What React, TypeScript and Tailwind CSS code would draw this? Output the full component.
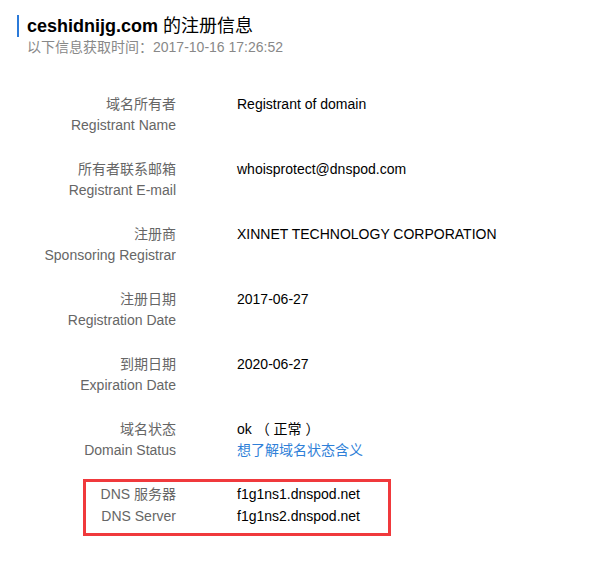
const rows = [
  { cn: '域名所有者', en: 'Registrant Name', value: 'Registrant of domain' },
  { cn: '所有者联系邮箱', en: 'Registrant E-mail', value: 'whoisprotect@dnspod.com' },
  { cn: '注册商', en: 'Sponsoring Registrar', value: 'XINNET TECHNOLOGY CORPORATION' },
  { cn: '注册日期', en: 'Registration Date', value: '2017-06-27' },
  { cn: '到期日期', en: 'Expiration Date', value: '2020-06-27' },
]

const font = { fontFamily: '"Liberation Sans", Arial, "Noto Sans CJK SC", sans-serif' }

const App = () => {
  return (
    <div className="w-[602px] h-[563px] bg-white text-[14px]" style={font}>
      <div className="pt-[15px] pl-[17px]">
        <h1 className="border-l-2 border-[#2b7ad9] pl-2 text-[18px] leading-[22px] text-black">
          <span className="font-bold">ceshidnijg.com</span> 的注册信息
        </h1>
        <p className="pl-[10px] text-[14px] leading-[20px] text-[#888]">以下信息获取时间：2017-10-16 17:26:52</p>
      </div>

      <div className="mt-[37px]">
        {rows.map((r) => (
          <div key={r.cn} className="flex mb-[23px] leading-[21px]">
            <div className="w-[176px] shrink-0 text-right text-[#666] whitespace-nowrap overflow-hidden">
              <div>{r.cn}</div>
              <div>{r.en}</div>
            </div>
            <div className="pl-[61px] text-black">{r.value}</div>
          </div>
        ))}

        <div className="flex leading-[21px]">
          <div className="w-[176px] shrink-0 text-right text-[#666]">
            <div>域名状态</div>
            <div>Domain Status</div>
          </div>
          <div className="pl-[61px]">
            <div className="text-black">ok （ 正常 ）</div>
            <a className="text-[#2f7fd8]" href="#">想了解域名状态含义</a>
          </div>
        </div>

        <div className="mt-[18px] ml-[83px] w-[308px] border-[3px] border-[#f0393c] pt-[1px] pb-[6px] flex leading-[22px]">
          <div className="w-[90px] shrink-0 text-right text-[#666] whitespace-nowrap">
            <div>DNS 服务器</div>
            <div>DNS Server</div>
          </div>
          <div className="pl-[61px] text-black">
            <div>f1g1ns1.dnspod.net</div>
            <div>f1g1ns2.dnspod.net</div>
          </div>
        </div>
      </div>
    </div>
  )
}

export default App
